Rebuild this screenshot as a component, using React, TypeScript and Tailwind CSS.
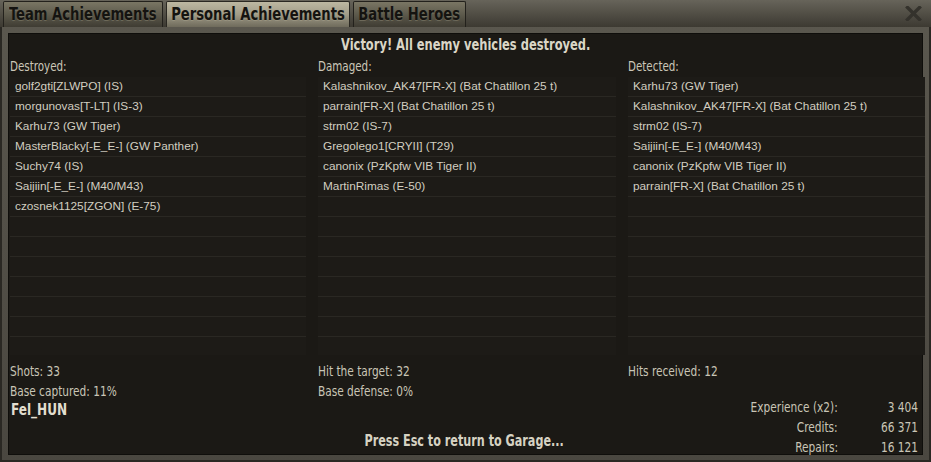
import React from "react";

const narrow = { fontFamily: '"DejaVu Sans Condensed", "Liberation Sans", sans-serif' };
const body = { fontFamily: '"Liberation Sans", Arial, sans-serif' };

const destroyed = [
  "golf2gti[ZLWPO] (IS)",
  "morgunovas[T-LT] (IS-3)",
  "Karhu73 (GW Tiger)",
  "MasterBlacky[-E_E-] (GW Panther)",
  "Suchy74 (IS)",
  "Saijiin[-E_E-] (M40/M43)",
  "czosnek1125[ZGON] (E-75)",
];
const damaged = [
  "Kalashnikov_AK47[FR-X] (Bat Chatillon 25 t)",
  "parrain[FR-X] (Bat Chatillon 25 t)",
  "strm02 (IS-7)",
  "Gregolego1[CRYII] (T29)",
  "canonix (PzKpfw VIB Tiger II)",
  "MartinRimas (E-50)",
];
const detected = [
  "Karhu73 (GW Tiger)",
  "Kalashnikov_AK47[FR-X] (Bat Chatillon 25 t)",
  "strm02 (IS-7)",
  "Saijiin[-E_E-] (M40/M43)",
  "canonix (PzKpfw VIB Tiger II)",
  "parrain[FR-X] (Bat Chatillon 25 t)",
];

// condensed text: the game font is narrower than anything installed, so squeeze it
function N({ children, cls = "origin-left scale-x-[0.82]" }: { children: React.ReactNode; cls?: string }) {
  return <span className={"inline-block whitespace-nowrap " + cls}>{children}</span>;
}

function Tab({ label, active, w }: { label: string; active?: boolean; w: string }) {
  return (
    <div
      className={
        "h-[26px] flex items-center justify-center border border-b-0 rounded-t-[2px] text-[17px] font-bold text-[#141310] " +
        w +
        (active
          ? " bg-gradient-to-b from-[#bdb8a2] via-[#a19c88] to-[#6f6b5c] border-[#2a2822]"
          : " bg-gradient-to-b from-[#7a7664] via-[#5d5a4c] to-[#3f3c33] border-[#23211c]")
      }
      style={{ ...narrow, textShadow: "0 1px 0 rgba(200,195,170,0.25)" }}
    >
      <N cls="origin-center scale-x-[0.86]">{label}</N>
    </div>
  );
}

function List({ title, items }: { title: string; items: string[] }) {
  const rows = Array.from({ length: 14 }, (_, i) => items[i] ?? "");
  return (
    <div className="flex flex-col">
      <div className="h-[21px] flex items-center text-[14px] text-[#cbc7b8]" style={narrow}>
        <N>{title}</N>
      </div>
      <div className="h-[278px] overflow-hidden bg-[#1f1d19]">
        {rows.map((r, i) => (
          <div
            key={i}
            className="h-[20px] flex items-center pl-[5px] border-b border-[#2a2823] bg-[#1d1b17] text-[11.8px] text-[#d2cec0]"
            style={body}
          >
            {r}
          </div>
        ))}
      </div>
    </div>
  );
}

function Stat({ children }: { children: React.ReactNode }) {
  return (
    <div className="h-[20px] flex items-center text-[14px] text-[#c9c5b6]" style={narrow}>
      <N cls="origin-left scale-x-[0.84]">{children}</N>
    </div>
  );
}

export default function App() {
  return (
    <div className="w-[931px] h-[462px] bg-[#2b2923] flex flex-col overflow-hidden">
      <div className="h-[27px] shrink-0 flex items-end bg-gradient-to-b from-[#67645a] to-[#3d3a32] pl-[3px] gap-[3px]">
        <Tab label="Team Achievements" w="w-[160px]" />
        <Tab label="Personal Achievements" w="w-[184px]" active />
        <Tab label="Battle Heroes" w="w-[113px]" />
        <div className="flex-1 h-full flex items-center justify-end pr-[9px]">
          <svg width="17" height="15" viewBox="0 0 17 15">
            <path d="M2.5 1.5 L14.5 13.5 M14.5 1.5 L2.5 13.5" stroke="#34322c" strokeWidth="3.4" strokeLinecap="square" />
          </svg>
        </div>
      </div>
      <div className="flex-1 min-h-0 bg-gradient-to-b from-[#5a574e] to-[#4a4740] px-[6px] pt-[6px] pb-[5px] border-l-2 border-r-2 border-b-2 border-[#2a2823]">
        <div className="h-full border border-[#0f0e0b] bg-[#1b1915] flex flex-col">
          <div className="h-[22px] shrink-0 flex items-center justify-center text-[15px] font-bold text-[#dad6c6] pt-[1px]" style={narrow}>
            <N cls="origin-center scale-x-[0.85]">Victory! All enemy vehicles destroyed.</N>
          </div>
          <div className="grid grid-cols-[296px_298px_297px] gap-x-[12px] pl-[1px]">
            <List title="Destroyed:" items={destroyed} />
            <List title="Damaged:" items={damaged} />
            <List title="Detected:" items={detected} />
          </div>
          <div className="grid grid-cols-[296px_298px_297px] gap-x-[12px] pl-[1px] mt-[6px]">
            <div>
              <Stat>Shots: 33</Stat>
              <Stat>Base captured: 11%</Stat>
            </div>
            <div>
              <Stat>Hit the target: 32</Stat>
              <Stat>Base defense: 0%</Stat>
            </div>
            <div>
              <Stat>Hits received: 12</Stat>
            </div>
          </div>
          <div className="flex-1 min-h-0 flex pl-[2px] pr-[4px] pb-[3px]">
            <div className="w-[250px] text-[16px] font-bold text-[#e2decf] leading-[18px]" style={narrow}>
              <N cls="origin-left scale-x-[0.84]">Fel_HUN</N>
            </div>
            <div className="flex-1 flex items-end justify-center">
              <div className="text-[15px] font-bold text-[#d6d2c2] leading-[20px]" style={narrow}>
                <N cls="origin-center scale-x-[0.83]">Press Esc to return to Garage...</N>
              </div>
            </div>
            <div className="w-[250px] h-[50px] -mt-[4px]">
              <div className="grid grid-cols-[1fr_80px] text-[14px] text-[#c9c5b6]" style={narrow}>
                {[
                  ["Experience (x2):", "3 404"],
                  ["Credits:", "66 371"],
                  ["Repairs:", "16 121"],
                ].map(([k, v]) => (
                  <React.Fragment key={k}>
                    <div className="h-[20px] flex items-center justify-end">
                      <N cls="origin-right scale-x-[0.84]">{k}</N>
                    </div>
                    <div className="h-[20px] flex items-center justify-end">
                      <N cls="origin-right scale-x-[0.84]">{v}</N>
                    </div>
                  </React.Fragment>
                ))}
              </div>
            </div>
          </div>
        </div>
      </div>
    </div>
  );
}
